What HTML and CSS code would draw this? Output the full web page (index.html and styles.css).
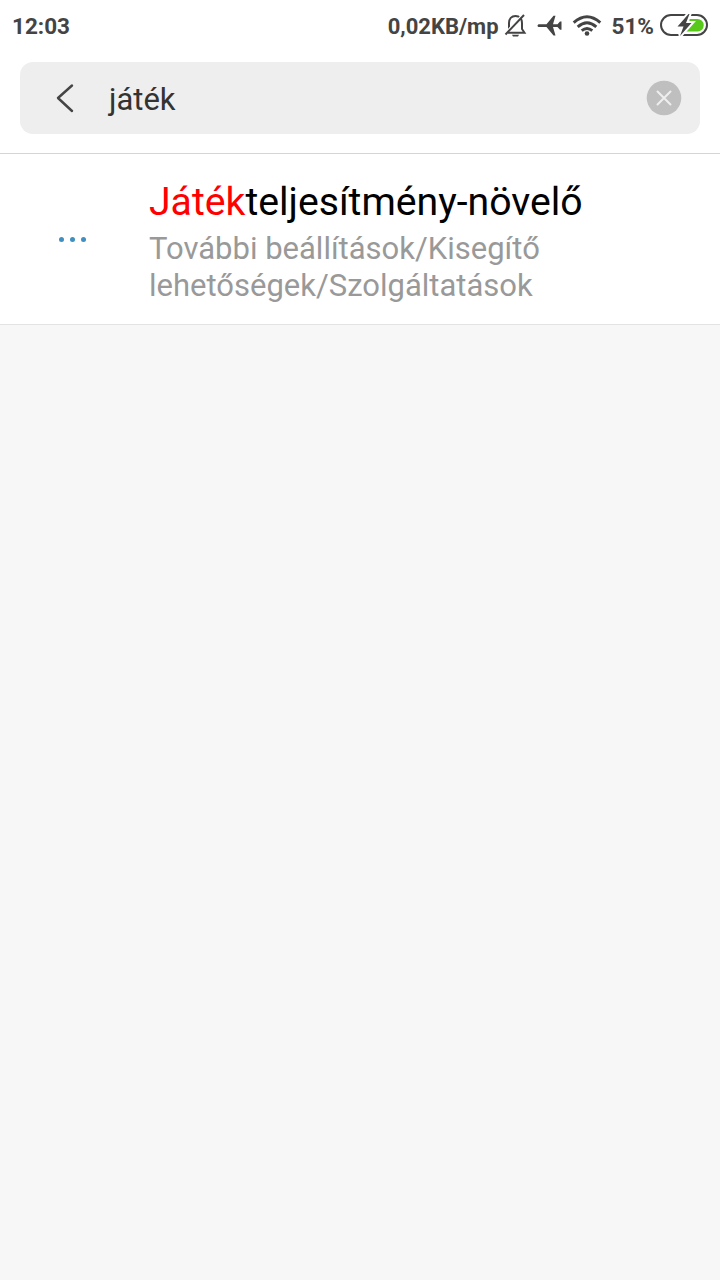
FILE: index.html
```html
<!DOCTYPE html>
<html lang="hu">
<head>
  <meta charset="UTF-8" />
  <meta name="viewport" content="width=device-width, initial-scale=1.0"/>
  <title>Beállítások</title>
  <link rel="stylesheet" href="styles.css">
</head>
<body>

<div class="status-bar">
  <span class="clock">12:03</span>
  <div class="status-icons">
    <span class="speed">0,02KB/mp</span>
    <svg class="icon-bell" width="24" height="26" viewBox="0 0 24 26" fill="none" stroke="#444" stroke-width="2">
      <path d="M5 17V10C5 6 7.500 3 11.500 3S18 6 18 10V16L20.500 19.800H4"/>
      <path d="M8 21.800H15L14 23.500H9Z" fill="#444" stroke="none"/>
      <path d="M2.500 18.500L17.500 2.500" stroke="#fff" stroke-width="1.500"/>
      <path d="M1.500 21.500L20 2"/>
    </svg>
    <svg class="icon-plane" width="26" height="22" viewBox="0 0 26 22" fill="#444">
      <path d="M1.500 9.200H9.500L16.500 .7H18.500L16 9.200H20.500L23 6.500H24.500V14.800H23L20.500 12.100H16L18.500 20.500H16.500L9.500 12.100H1.500Q-.5 10.600 1.500 9.200Z"/>
    </svg>
    <svg class="icon-wifi" width="30" height="22" viewBox="0 0 30 22" fill="none" stroke="#444" stroke-width="2.900">
      <path d="M1.700 7.700Q15 -4.200 28.300 7.700"/>
      <path d="M5.700 11.800Q15 3.600 24.300 11.800"/>
      <path d="M9.700 15.700Q15 11.400 20.300 15.700"/>
      <circle cx="15" cy="18.500" r="2.300" fill="#444" stroke="none"/>
    </svg>
    <span class="percent">51%</span>
    <svg class="icon-battery" width="48" height="24" viewBox="0 0 48 24">
      <rect x="1" y="1" width="46" height="20" rx="10" fill="#fff" stroke="#444" stroke-width="2"/>
      <path d="M29 5H37.500A6 6 0 0 1 37.500 17.500H22L30 9.500Z" fill="#58c91b"/>
      <path d="M28.500 0L17.500 12.500H23.500L20 22L31.500 9H26L29.500 0Z" fill="#444" stroke="#fff" stroke-width="4" paint-order="stroke"/>
    </svg>
  </div>
</div>

<header class="search-header">
  <div class="search-box">
    <svg class="icon-back" width="18" height="30" viewBox="0 0 18 30" fill="none" stroke="#444" stroke-width="2.400" stroke-linecap="round" stroke-linejoin="round">
      <path d="M16 2.500L2 15L16 28"/>
    </svg>
    <span class="search-text">játék</span>
    <svg class="icon-clear" width="36" height="36" viewBox="0 0 36 36">
      <circle cx="18" cy="18" r="17.300" fill="#bfbfbf"/>
      <path d="M11.500 11.500L24.500 24.500M24.500 11.500L11.500 24.500" stroke="#eee" stroke-width="2" stroke-linecap="round"/>
    </svg>
  </div>
</header>

<main>
  <div class="result">
    <div class="dots"><span></span><span></span><span></span></div>
    <div class="result-info">
      <div class="result-title"><span class="match">Játék</span>teljesítmény-növelő</div>
      <div class="result-path">További beállítások/Kisegítő lehetőségek/Szolgáltatások</div>
    </div>
  </div>
</main>

</body>
</html>
```
FILE: styles.css
```css
* {
  box-sizing: border-box;
}

body {
  margin: 0;
  min-height: 100vh;
  font-family: Roboto, sans-serif;
  background: #f7f7f7;
}

svg {
  display: block;
  flex-shrink: 0;
}

.status-bar {
  display: flex;
  justify-content: space-between;
  height: 52px;
  padding: 0 12px;
  align-items: center;
  background: #fff;
  color: #444;
  font-size: 22.5px;
  font-weight: 700;
}

.status-icons {
  display: flex;
  align-items: center;
}

.speed {
  font-size: 22px;
}

.icon-bell {
  margin-left: 5px;
}

.icon-plane {
  margin-left: 9px;
}

.icon-wifi {
  margin-left: 9px;
}

.percent {
  margin-left: 10px;
}

.icon-battery {
  margin-left: 6px;
}

.search-header {
  padding: 10px 20px 19px;
  background: #fff;
  border-bottom: 1px solid #d5d5d5;
}

.search-box {
  display: flex;
  align-items: center;
  height: 72px;
  padding: 0 18px 0 36px;
  background: #eee;
  border-radius: 13px;
}

.search-text {
  flex: 1;
  margin-left: 35px;
  padding-top: 2px;
  color: #333;
  font-size: 31px;
}

.result {
  display: flex;
  align-items: center;
  height: 171px;
  background: #fff;
  border-bottom: 1px solid #e3e3e3;
}

.dots {
  display: flex;
  gap: 6px;
  width: 149px;
  padding-left: 59px;
}

.dots span {
  width: 5px;
  height: 5px;
  border-radius: 50%;
  background: #3f8fbf;
}

.result-info {
  width: 440px;
  padding-top: 4px;
}

.result-title {
  margin-bottom: 4px;
  color: #000;
  font-size: 39.2px;
  line-height: 48px;
}

.match {
  color: #f00;
}

.result-path {
  color: #999;
  font-size: 31px;
  line-height: 37px;
}
```
